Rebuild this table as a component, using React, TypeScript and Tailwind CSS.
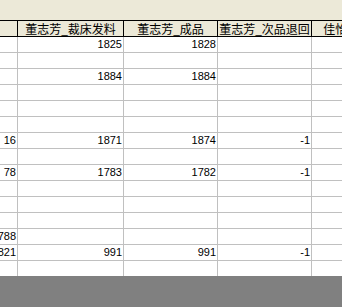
const columns = [
  { key: 'c0', title: '', width: 'w-[18px]' },
  { key: 'c1', title: '董志芳_裁床发料', width: 'w-[106px]' },
  { key: 'c2', title: '董志芳_成品', width: 'w-[94px]' },
  { key: 'c3', title: '董志芳_次品退回', width: 'w-[94px]' },
  { key: 'c4', title: '佳怡_裁床发料', width: 'w-[102px]' },
];

type Row = Partial<Record<string, string>>;

const rows: Row[] = [
  { c1: '1825', c2: '1828' },
  {},
  { c1: '1884', c2: '1884' },
  {},
  {},
  {},
  { c0: '16', c1: '1871', c2: '1874', c3: '-1' },
  {},
  { c0: '78', c1: '1783', c2: '1782', c3: '-1' },
  {},
  {},
  {},
  { c0: '788' },
  { c0: '821', c1: '991', c2: '991', c3: '-1' },
  {},
];

export default function App() {
  return (
    <div className="flex h-[307px] w-[342px] flex-col overflow-hidden bg-[#ece9d8]">
      <div className="h-[20px] shrink-0 bg-[#ece9d8]" />

      <div className="shrink-0 bg-white">
        <div className="flex h-[17px] border-y border-black bg-[#ece9d8]">
          {columns.map((col) => (
            <div
              key={col.key}
              className={`${col.width} flex shrink-0 items-center justify-center overflow-hidden whitespace-nowrap border-r border-black text-[12px] leading-[15px] text-black`}
              style={{ fontFamily: '"Noto Sans CJK SC", "Liberation Sans", sans-serif' }}
            >
              {col.title}
            </div>
          ))}
        </div>

        {rows.map((row, i) => (
          <div
            key={i}
            className={`flex ${i === rows.length - 1 ? 'h-[15px]' : 'h-[16px] border-b border-[#c0c0c0]'}`}
          >
            {columns.map((col) => (
              <div
                key={col.key}
                className={`${col.width} flex shrink-0 items-center justify-end overflow-hidden whitespace-nowrap border-r border-[#c0c0c0] pr-[1px] text-[11px] leading-[15px] text-black`}
                style={{ fontFamily: '"Liberation Sans", Arial, sans-serif' }}
              >
                {row[col.key] ?? ''}
              </div>
            ))}
          </div>
        ))}
      </div>

      <div className="flex-1 bg-[#808080]" />
    </div>
  );
}
